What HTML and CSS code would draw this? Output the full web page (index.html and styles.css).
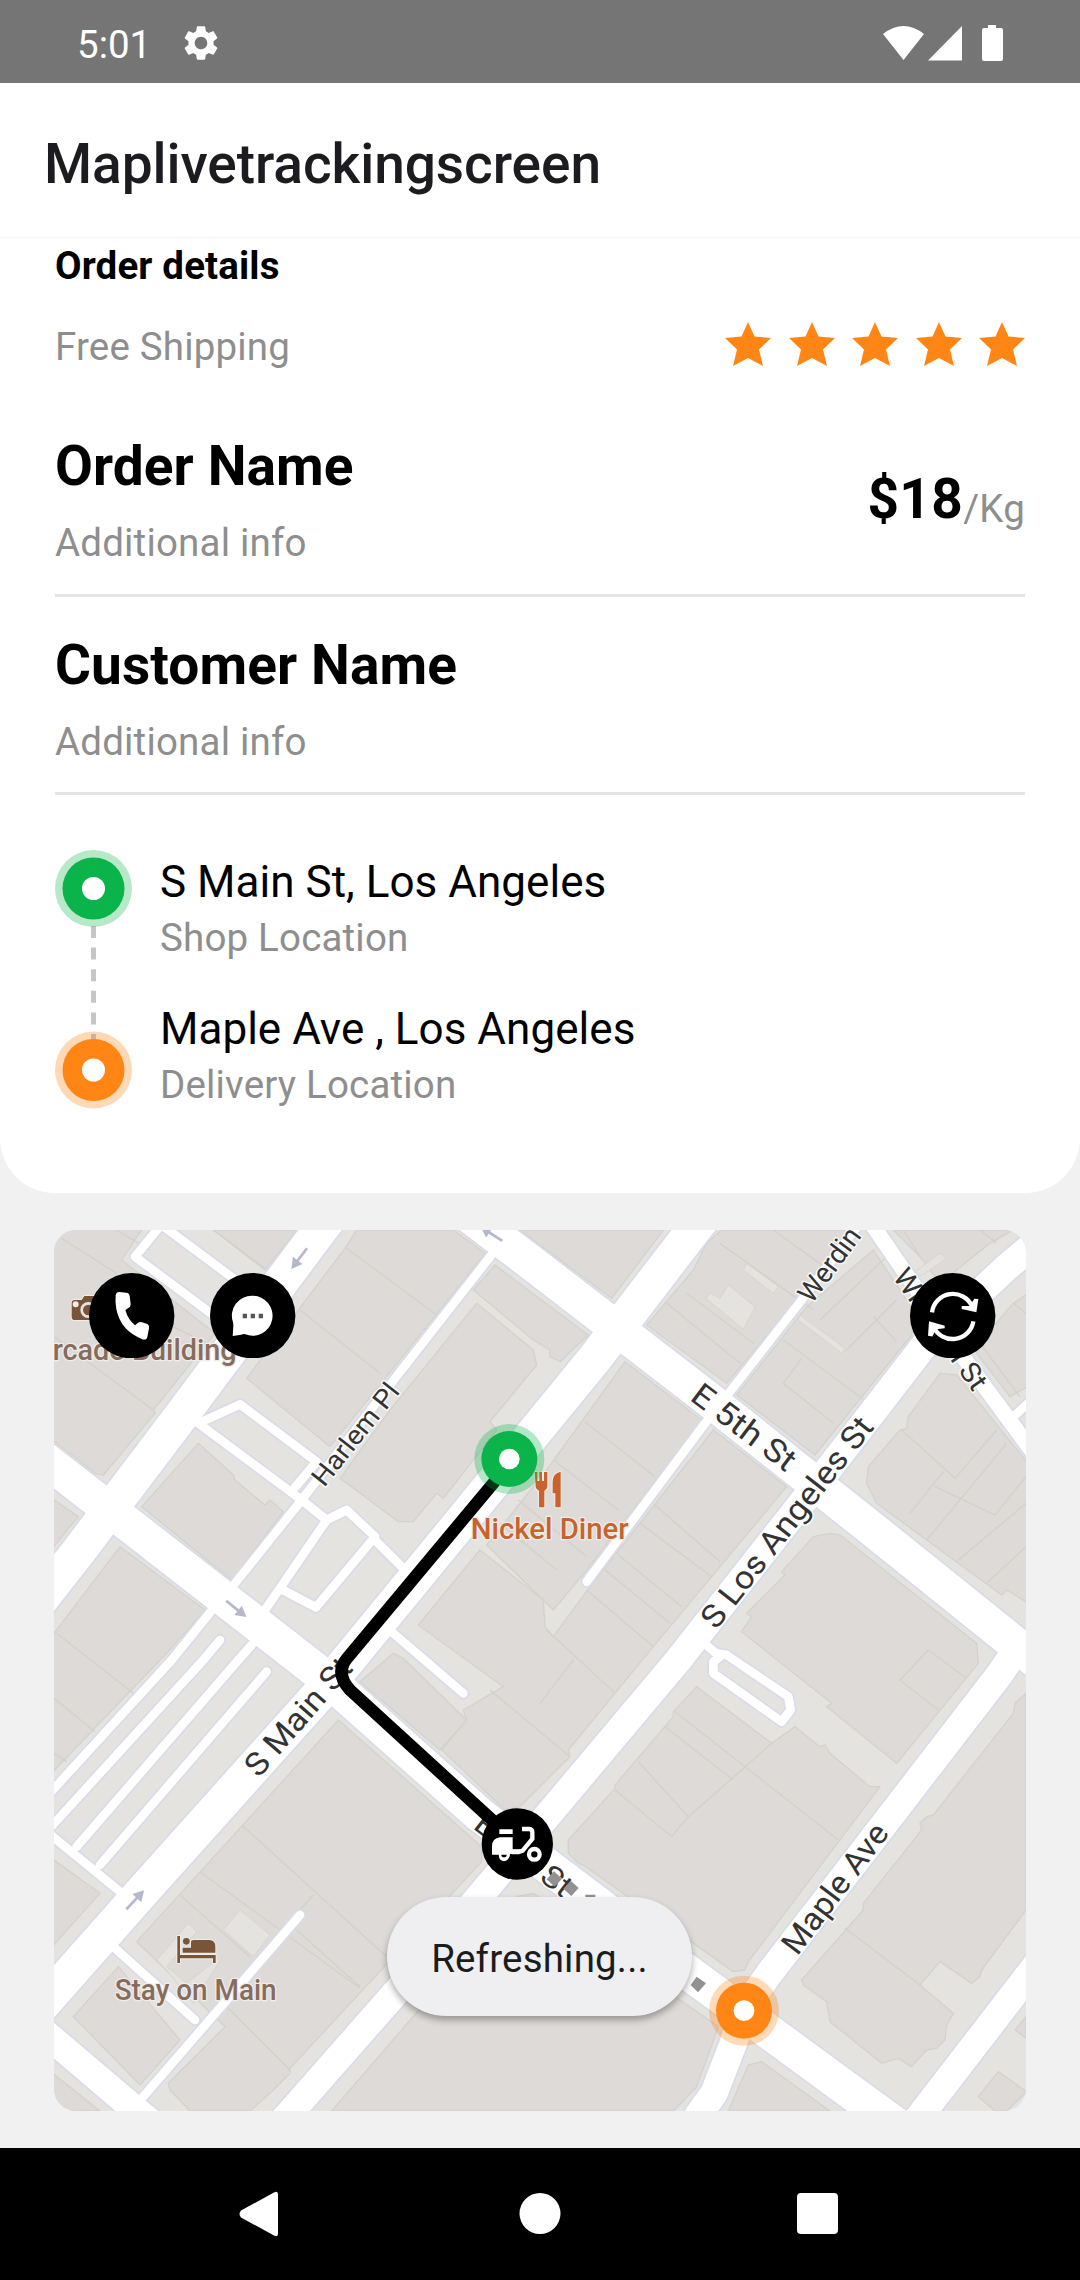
FILE: index.html
```html
<!DOCTYPE html>
<html lang="en">
<head>
<meta charset="utf-8">
<title>Maplivetrackingscreen</title>
<link rel="stylesheet" href="styles.css">
</head>
<body>
<div class="screen">
  <div class="status">
    <span class="time">5:01</span>
    <svg class="gear" viewBox="0 0 24 24"><path d="M19.14 12.94c.04-.3.06-.61.06-.94 0-.32-.02-.64-.07-.94l2.03-1.58c.18-.14.23-.41.12-.61l-1.92-3.32c-.12-.22-.37-.29-.59-.22l-2.39.96c-.5-.38-1.03-.7-1.62-.94l-.36-2.54c-.04-.24-.24-.41-.48-.41h-3.84c-.24 0-.43.17-.47.41l-.36 2.54c-.59.24-1.13.57-1.62.94l-2.39-.96c-.22-.08-.47 0-.59.22L2.74 8.87c-.12.21-.08.47.12.61l2.03 1.58c-.05.3-.09.63-.09.94s.02.64.07.94l-2.03 1.58c-.18.14-.23.41-.12.61l1.92 3.32c.12.22.37.29.59.22l2.39-.96c.5.38 1.03.7 1.62.94l.36 2.54c.05.24.24.41.48.41h3.84c.24 0 .44-.17.47-.41l.36-2.54c.59-.24 1.13-.56 1.62-.94l2.39.96c.22.08.47 0 .59-.22l1.92-3.32c.12-.22.07-.47-.12-.61l-2.01-1.58zM12 15.6c-1.98 0-3.6-1.62-3.6-3.6s1.62-3.6 3.6-3.6 3.6 1.62 3.6 3.6-1.62 3.6-3.6 3.6z"/></svg>
    <svg class="signals" viewBox="0 0 122 38"><path d="M0 9Q20.500-7 41 9L20.500 35ZM79 1V35.500H45ZM105 0h8v3h5q2 0 2 2v29q0 2-2 2h-17q-2 0-2-2V5q0-2 2-2h4Z"/></svg>
  </div>
  <header class="appbar"><h1>Maplivetrackingscreen</h1></header>
  <main class="content">
    <section class="card">
      <h2>Order details</h2>
      <div class="shipping">
        <span class="muted">Free Shipping</span>
        <div class="stars">
          <svg viewBox="0 0 46 44"><path d="M23 0l6.500 14.500L46 16 34 27.500 38 44 23 36 8 44 12 27.500 0 16l16.500-1.500z"/></svg>
          <svg viewBox="0 0 46 44"><path d="M23 0l6.500 14.500L46 16 34 27.500 38 44 23 36 8 44 12 27.500 0 16l16.500-1.500z"/></svg>
          <svg viewBox="0 0 46 44"><path d="M23 0l6.500 14.500L46 16 34 27.500 38 44 23 36 8 44 12 27.500 0 16l16.500-1.500z"/></svg>
          <svg viewBox="0 0 46 44"><path d="M23 0l6.500 14.500L46 16 34 27.500 38 44 23 36 8 44 12 27.500 0 16l16.500-1.500z"/></svg>
          <svg viewBox="0 0 46 44"><path d="M23 0l6.500 14.500L46 16 34 27.500 38 44 23 36 8 44 12 27.500 0 16l16.500-1.500z"/></svg>
        </div>
      </div>
      <div class="row order">
        <div><h3>Order Name</h3><p class="muted">Additional info</p></div>
        <div class="price"><b>$18</b><span class="muted">/Kg</span></div>
      </div>
      <div class="row customer">
        <div><h3>Customer Name</h3><p class="muted">Additional info</p></div>
      </div>
      <div class="places">
        <svg class="track" viewBox="0 0 77 259">
          <circle cx="38.500" cy="38.500" r="38.500" fill="#b7e9c8"/><circle cx="38.500" cy="38.500" r="31" fill="#0bb34b"/><circle cx="38.500" cy="38.500" r="11.500" fill="#fff"/>
          <circle cx="38.500" cy="220" r="38.500" fill="#ffd9b6"/>
          <path d="M38.500 76V192" stroke="#8e8e8e" stroke-opacity=".5" stroke-width="5" stroke-dasharray="12 9.600" fill="none"/>
          <circle cx="38.500" cy="220" r="31" fill="#ff8615"/><circle cx="38.500" cy="220" r="11.500" fill="#fff"/>
        </svg>
        <div class="addresses">
          <div class="address"><p>S Main St, Los Angeles</p><p class="muted">Shop Location</p></div>
          <div class="address"><p>Maple Ave , Los Angeles</p><p class="muted">Delivery Location</p></div>
        </div>
      </div>
    </section>
    <section class="map">
      <svg class="streets" viewBox="42 60 2916 2643">
        <defs>
          <g id="roads">
            <path class="r108" d="M1200-50L1500 178 2000 563 2500 960 3000 1362M2020-15L1960 60 1671 437 1162 1060 865 1422 322 2028-30 2425M890-5L840 60 429 610 115 1025-50 1235M-20 722L42 770 290 962 865 1410 1320 1815 1960 2299 2400 2622 2700 2840"/>
            <path class="r86" d="M3010 80L2900 172 2790 275 2650 410 2365 778 1915 1350 1520 1820 1250 2140 755 2703 700 2765M2935 1310L2881 1390 2192 2285 2110 2400 2080 2500 2022 2650 1975 2715M3020 2225L2958 2305 2650 2705 2610 2757M-20 2440L42 2492 290 2703 340 2745"/>
            <path class="r46" d="M2470 5L2590 180 2790 470 2990 742"/>
            <path class="r28" d="M1352 138L1065 505 785 870 585 1120M512 1205L395 1350 20 1760M540 1290L490 1350 20 1865M635 1305L595 1350 110 1910M680 1385L180 1965M20 1865L240 2045M475 640L600 583 830 755 765 832M475 640L785 870 860 930 920 900 1005 980 828 1192 720 1135M1000 985L1085 1070M860 930L675 1200M1060 1270L1270 1450M2490 0L2285 270 2070 545 1995 640 1640 1115M2920 620L2980 565M2005 1310L2040 1340 2020 1355 2020 1390 2225 1535 2252 1500 2245 1460 2060 1335 2030 1330M400 0L285 140 600 375M365 45L620 235M225 2215L465 2430M780 2115L310 2660"/>
          </g>
          <path id="arrow" d="M-38-4H8V-18L40 0 8 18V4H-38Z"/>
        </defs>
        <path class="land" d="M0 0H3000V2800H0Z"/>
        <g class="buildings">
          <path d="M0 30H325L245 150 525 370 340 600 345 610 190 795 165 790 0 660ZM520 60H770L675 180ZM0 840L115 920 0 1060ZM475 700L580 795 585 810 675 885 690 870 730 905 575 1110 305 890ZM950 60H1240L1335 130 1040 500 870 710 620 505 915 115ZM1310 280L1480 420 1490 465 1350 635 1370 660 1210 865 1190 850 1120 935H1075L900 805 1050 600ZM1365 165L1645 375 1560 455 1530 440V420L1480 390 1300 240ZM240 1010L495 1200 380 1330 0 1725V1325ZM0 1920L180 2050 0 2250ZM0 2560L180 2703H0Z"/>
          <path d="M895 1530L1325 1910V1955L750 2575V2590L700 2640 630 2703H450L390 2640 385 2620 555 2450 290 2195ZM235 2270L420 2490 300 2625 100 2420ZM875 2703L1430 2060 1480 2050 1920 2370 2035 2450 1970 2630 1900 2703ZM2065 2703L2125 2565 2165 2555 2370 2703Z"/>
          <path d="M1970 1430L2195 1600 2265 1550 2340 1610 2355 1605 2370 1630 2490 1730H2520L2125 2255 2115 2280 2080 2285 1630 1965 1615 1960 1585 1930V1890L1725 1735V1725L1900 1520V1505ZM2958 1450L2925 1480 2920 1510 2680 1815 2660 1820 2640 1840 2645 1860 2470 2080V2100L2285 2310 2290 2325 2360 2375 2370 2435 2525 2560 2575 2545 2615 2570 2660 2520 2690 2515 2715 2490 2720 2445 2740 2410 2640 2325 2700 2255 2795 2320 2820 2300 2825 2280 2958 2100ZM2875 2585L2960 2645 2900 2703H2865L2815 2660ZM2925 2460L2958 2420V2485Z"/>
          <path d="M2370 970L2400 975 2810 1300 2815 1360 2570 1660 2360 1490 2375 1480 2105 1265 2135 1220 2120 1210 2235 1095 2225 1085 2275 1030 2320 980ZM2700 490L2750 495 2980 780V1190L2900 1140 2885 1155 2660 990 2510 880 2480 820 2485 770 2580 660 2600 655 2605 620ZM2980 240L2920 280 2820 395 2810 430 2910 560 2980 520ZM2500 120L2620 300 2615 375 2325 735 2090 555 2300 290ZM2045 60H2450L2270 270 2060 520 1820 345 1960 180 2000 100ZM1440 60H1870L1715 265ZM2560 60H2920L2850 100 2700 220 2640 140Z"/>
          <path d="M1755 455L1985 630 1640 1080 1540 1200 1340 1005 1520 780ZM1320 1020L1510 1170 1515 1250 1540 1280 1650 1130 2020 660 2240 830 1840 1310 1585 1620 1590 1640 1440 1790 1395 1800 1205 1620 1280 1530 1270 1500 1390 1430 1135 1245ZM1060 1330L1090 1345 1110 1365 1280 1530 1200 1620 960 1415Z"/>
        </g>
        <g class="patches">
          <path d="M600 2100L690 2175 640 2240 550 2160ZM445 2140L470 2165 380 2270 440 2320 550 2235 460 2380 380 2280 350 2250ZM2065 225L2145 290 2110 358 1998 265 2012 250 2040 265ZM2120 160L2215 230 2200 250 2110 180ZM2700 130L2720 145 2640 200 2625 185ZM2280 315L2415 415 2405 430 2275 330Z"/>
        </g>
        <path class="lots" d="M65 85L230 190M230 60L330 120M42 380L340 600M400 350L500 400M520 60L675 175M920 115L1190 315M780 300L1020 490M50 1270L280 1450M42 1465L165 1565M42 1630L80 1655M605 1845L1040 2240M480 1985L960 2335M420 2055L630 2240M820 2055L700 2190M770 2160L960 2330M550 2380L750 2580M1905 1505L2395 1890M1875 1550L2080 1710M1795 1655L1945 1820 1895 1880 1725 1740M2195 1600L2020 1755 1945 1820M2415 2155L2640 2325M2665 1320L2580 1410 2695 1500M2665 1320L2780 1405M2585 660L2745 805 2870 660M2710 785L2610 910M2685 830L2865 915 2958 800M2900 700L2660 990M2958 880L2755 1050M2958 1010L2840 1120M2230 390L2500 590M2285 445L2230 520 2380 640M2500 320L2570 395M2540 140L2340 330M2570 270L2420 420M2200 60L2380 190M2040 100L2320 300M1940 250L2140 400M1880 280L2100 460M2590 60L2640 140M2820 60L2870 100M1845 885L2040 1055M1800 940L2015 1100M1735 1035L1925 1190M1695 1080L1890 1240M1640 1140L1840 1310M1635 635L1845 800M1540 750L1735 900M1435 870L1640 1040M1380 940L1550 1080M1520 1260L1725 1450M1600 1350L1500 1480M1350 1440L1590 1640M2920 280L2958 310M2820 400L2940 560"/>
        <use href="#roads" class="casing"/>
        <use href="#roads" class="fill"/>
        <g class="arrows">
          <use href="#arrow" transform="translate(778 145) rotate(127)"/><use href="#arrow" transform="translate(588 1196) rotate(39)"/><use href="#arrow" transform="translate(285 2070) rotate(-47)"/><use href="#arrow" transform="translate(1355 72) rotate(213)"/>
        </g>
        <g class="label">
          <text font-size="80" transform="translate(853 834) rotate(-51.500)" textLength="368" lengthAdjust="spacingAndGlyphs">Harlem Pl</text>
          <text font-size="96" transform="translate(656 1706) rotate(-49)" textLength="436" lengthAdjust="spacingAndGlyphs">S Main St</text>
          <text font-size="96" transform="translate(2028 1262) rotate(-52)" textLength="774" lengthAdjust="spacingAndGlyphs">S Los Angeles St</text>
          <text font-size="96" transform="translate(1946 568) rotate(37)" textLength="366" lengthAdjust="spacingAndGlyphs">E 5th St</text>
          <text font-size="84" transform="translate(2315 284) rotate(-53.500)" textLength="256" lengthAdjust="spacingAndGlyphs">Werdin</text>
          <text font-size="84" transform="translate(2556 200) rotate(55)" textLength="425" lengthAdjust="spacingAndGlyphs">Winston St</text>
          <text font-size="96" transform="translate(2272 2240) rotate(-53)" textLength="463" lengthAdjust="spacingAndGlyphs">Maple Ave</text>
          <text font-size="92" transform="translate(1296 1853) rotate(38)" textLength="345" lengthAdjust="spacingAndGlyphs">E 6th St</text>
        </g>
        <g class="dots"><path d="M1542 1984l24 22-22 24-24-22ZM1592 2012l24 22-22 24-24-22ZM1636 2054h30v10h-30ZM1970 2300l28 20-24 27-22-22Z"/></g>
        <g class="poi brown">
          <text x="38" y="450" textLength="552" lengthAdjust="spacingAndGlyphs">rcade Building</text>
          <text x="224" y="2370" textLength="486" lengthAdjust="spacingAndGlyphs">Stay on Main</text>
          <path class="glyph" d="M105 270h20l8-12h40v72h-68q-10 0-10-10v-40q0-10 10-10Z"/><circle cx="145" cy="300" r="20" fill="none" stroke="#e4e3df" stroke-width="8"/><circle cx="107" cy="283" r="5" fill="#e4e3df"/>
          <path class="glyph" d="M412 2178h8v57h107v24h-8v-14H420v14h-8ZM428 2213h25v-16q0-7 8-7h47q18 0 18 20v18h-98Z"/><circle class="glyph" cx="439" cy="2194" r="10" stroke="none"/>
        </g>
        <g class="poi orange">
          <text x="1292" y="988" textLength="474" lengthAdjust="spacingAndGlyphs">Nickel Diner</text>
          <path class="glyph" d="M1484 786h8v27h6v-27h8v27h6v-27h10v42q0 10-9 14v50h-16v-50q-10-4-10-14ZM1562 785v107h-16v-42h-8v-35q0-25 24-30Z"/>
        </g>
        <path class="route" d="M1408 762L921 1345Q884 1390 930 1440L1400 1870"/>
        <g fill="#0bb34b"><circle cx="1408" cy="747" r="105" fill-opacity=".3"/><circle cx="1408" cy="747" r="84"/><circle cx="1408" cy="747" r="31" fill="#fff"/></g>
        <g fill="#ff8615"><circle cx="2112" cy="2402" r="105" fill-opacity=".3"/><circle cx="2112" cy="2402" r="84"/><circle cx="2112" cy="2402" r="31" fill="#fff"/></g>
        <g transform="translate(1260 1740)">
          <circle cx="172" cy="162" r="107"/>
          <path fill="#fff" d="M118 118h40v14h-40ZM120 142h38v36h22v14h-30a17 17 0 0 1-34 2H96v-26q0-22 24-26Z"/>
          <circle cx="132" cy="199" r="15" fill="#fff"/><path d="M124 194h16q0 8-8 8t-8-8Z"/>
          <path fill="none" stroke="#fff" stroke-width="13" d="M186 117h20q11 0 11 10v20L188 182l-12 4h-22"/>
          <circle cx="223" cy="193" r="16" fill="none" stroke="#fff" stroke-width="13"/>
        </g>
      </svg>
      <div class="controls">
        <svg class="control" viewBox="0 0 256 256"><circle cx="128" cy="128" r="128"/><path fill="#fff" d="M80 66q2-10 12-9l20 2q9 1 10 11l3 24q0 8-7 11l-9 6q8 29 29 46l9-8q6-4 12-1l16 5q7 4 5 12l-5 26q-2 11-14 8Q95 174 82 109q-4-22-2-43Z"/></svg>
        <svg class="control" viewBox="0 0 256 256"><circle cx="128" cy="128" r="128"/><path fill="#fff" d="M128 68a60 60 0 1 1-22 116q-6-3-12 1l-26 4 2-31q0-7-1-10A60 60 0 0 1 128 68Z"/><path fill="#555" d="M98 122h13v14H98ZM122 122h13v14h-13ZM146 122h13v14h-13Z"/></svg>
        <svg class="control refresh" viewBox="0 0 256 256"><circle cx="128" cy="128" r="128"/><g fill="none" stroke="#fff" stroke-width="13"><path d="M66 118A63 63 0 0 1 186 100M190 145A63 63 0 0 1 70 160"/></g><path fill="#fff" d="M205 78L199 118 155 108V99L178 99 193 77ZM54 188L57 145 104 158V166L78 169 67 190Z"/></svg>
      </div>
      <div class="toast">Refreshing...</div>
    </section>
  </main>
  <nav class="navbar">
    <svg viewBox="0 0 600 46"><path d="M2 19.500L35 1.500q4-2 4 2v39q0 4-4 2L2 26.500Q-1 23 2 19.500Z"/><circle cx="301" cy="22.500" r="20.500"/><rect x="558" y="2" width="41" height="41" rx="4"/></svg>
  </nav>
</div>
</body>
</html>
```
FILE: styles.css
```css
* { box-sizing: border-box; margin: 0; padding: 0; }
body { font-family: Roboto, "Liberation Sans", sans-serif; font-size: 38.5px; line-height: 46px; color: #000; background: #f1f1f1; }
svg { display: block; flex: none; }
.screen { width: 1080px; height: 2280px; display: flex; flex-direction: column; overflow: hidden; }
.status { height: 83px; background: #757575; color: #fff; display: flex; align-items: flex-start; padding: 22px 75px 0 77px; }
.status svg { fill: #fff; }
.time { width: 103px; }
.gear { width: 42px; height: 42px; }
.signals { width: 122px; height: 38px; margin: 3px 0 0 auto; }
.appbar { height: 153px; background: #fff; display: flex; align-items: center; padding: 8px 44px 0; }
h1 { font-size: 55px; line-height: 64px; font-weight: 500; letter-spacing: -.06px; color: #1c1b1f; }
.content { flex: 1; display: flex; flex-direction: column; gap: 37px; }
.card { height: 957px; background: #fff; border-top: 3px solid #fbfbfb; border-radius: 0 0 55px 55px; padding: 4px 55px 0; }
h2 { font-size: 38.5px; line-height: 46px; font-weight: 700; letter-spacing: .15px; }
h3, .price b { font-size: 55px; line-height: 64px; font-weight: 700; letter-spacing: .1px; }
.muted { color: #8e8e8e; letter-spacing: .18px; }
.shipping { display: flex; justify-content: space-between; align-items: flex-start; margin: 35px 0 64px; height: 46px; }
.stars { display: flex; gap: 17.4px; margin-top: -2px; }
.stars svg { width: 46px; height: 44px; fill: #ff8615; }
.row { display: flex; justify-content: space-between; border-bottom: 3px solid #e4e4e4; }
.row p { margin-top: 22px; }
.order { padding-bottom: 28px; }
.customer { margin-top: 36px; padding-bottom: 27px; }
.price { display: flex; align-items: flex-start; padding-top: 33px; }
.price b { letter-spacing: .4px; }
.price span { margin-top: 19px; }
.places { display: flex; gap: 28px; margin-top: 55px; }
.track { width: 77px; height: 259px; }
.addresses { display: flex; flex-direction: column; gap: 42px; padding-top: 6px; }
.address { display: flex; flex-direction: column; gap: 7px; }
.address p:first-child { font-size: 44px; line-height: 52px; letter-spacing: .03px; }
.map { position: relative; width: 972px; height: 881px; margin: 0 54px; border-radius: 22px; overflow: hidden; }
.streets { width: 972px; height: 881px; }
.land { fill: #e4e3df; }
.buildings { fill: #dedad7; stroke: #d5d2cd; stroke-width: 4; stroke-linejoin: round; }
.patches { fill: #e4e3df; stroke: #d8d5d0; stroke-width: 3; }
.lots { fill: none; stroke: #d4d0cb; stroke-width: 4; }
#roads path { fill: none; stroke-linejoin: round; stroke-linecap: round; }
.casing { stroke: #d9dce8; --edge: 10px; }
.fill { stroke: #fff; --edge: 0px; }
.r108 { stroke-width: calc(104px + var(--edge)); }
.r86 { stroke-width: calc(82px + var(--edge)); }
.r46 { stroke-width: calc(46px + var(--edge)); }
.r28 { stroke-width: calc(26px + var(--edge)); }
.arrows { fill: #b5b8cb; }
.dots { fill: #929292; }
.label { font-weight: 400; fill: #333; stroke: #fff; stroke-opacity: .8; stroke-width: 9px; paint-order: stroke; stroke-linejoin: round; }
.poi { font-size: 86px; font-weight: 500; stroke: #efedea; stroke-width: 8px; paint-order: stroke; stroke-linejoin: round; }
.poi circle { paint-order: normal; }
.brown { fill: #866c5d; }
.brown .glyph { fill: #7a5438; }
.orange { fill: #c9632e; }
.glyph { stroke-width: 6px; }
.route { fill: none; stroke: #000; stroke-width: 37px; }
.controls { position: absolute; inset: 42.6px 30.3px auto 35.4px; display: flex; gap: 35.4px; }
.control { width: 85.4px; height: 85.4px; }
.refresh { margin-left: auto; }
.toast { position: absolute; left: 333px; top: 667px; width: 305px; height: 119px; border-radius: 60px; background: #efeff1; color: #1a1c1e; display: flex; align-items: center; justify-content: center; padding-top: 5px; letter-spacing: .18px; box-shadow: 0 4px 7px rgba(0, 0, 0, .32); }
.navbar { height: 132px; background: #000; display: flex; padding: 43px 0 0 239px; }
.navbar svg { width: 600px; height: 46px; fill: #fff; }
```
